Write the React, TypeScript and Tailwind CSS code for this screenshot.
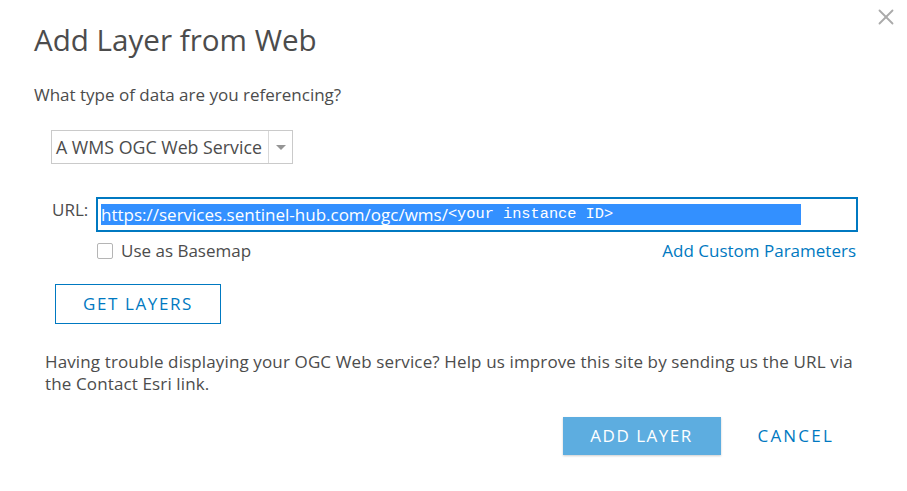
import { X } from "lucide-react";

const font = { fontFamily: "'Open Sans', Lato, sans-serif" };

export default function App() {
  return (
    <div
      className="relative h-[491px] w-[907px] overflow-hidden bg-white text-[#4c4c4c]"
      style={font}
    >
      <button type="button" className="absolute right-[8px] top-[4px] text-[#aaaaaa]">
        <X className="h-[26px] w-[26px]" strokeWidth={1.7} />
      </button>

      <div className="pl-[34px] pt-[22px]">
        <h1 className="text-[29.6px] leading-[36px] font-normal">Add Layer from Web</h1>
        <p className="mt-[26px] text-[17px] leading-[22px]">What type of data are you referencing?</p>

        <div className="ml-[17px] mt-[24px] flex h-[34px] w-[242px] items-stretch border border-[#cacaca]">
          <span className="flex flex-1 items-center pl-[4px] text-[17.8px] whitespace-nowrap">A WMS OGC Web Service</span>
          <span className="flex w-[24px] items-center justify-center border-l border-[#d8d8d8]">
            <span className="h-0 w-0 border-x-[5px] border-t-[5px] border-x-transparent border-t-[#959595]" />
          </span>
        </div>

        <div className="mt-[33px] flex items-start">
          <span className="ml-[18px] mt-[2px] w-[44px] text-[17px] leading-[22px]">URL:</span>
          <div className="flex h-[35px] w-[762px] items-center border-2 border-[#0079c1] pl-[3px]">
            <span className="flex h-[21px] w-[700px] items-center whitespace-nowrap bg-[#3390ff] text-[17px] text-white">
              https://services.sentinel-hub.com/ogc/wms/
              <span className="text-[15.3px]" style={{ fontFamily: "'Liberation Mono', monospace" }}>
                &lt;your instance ID&gt;
              </span>
            </span>
          </div>
        </div>

        <div className="ml-[63px] mt-[8px] flex w-[759px] items-center justify-between text-[17px] leading-[22px]">
          <label className="flex items-center gap-[8px]">
            <span className="h-[16px] w-[16px] rounded-[2px] border border-[#b5b5b5] bg-white" />
            Use as Basemap
          </label>
          <a className="text-[#0079c1]">Add Custom Parameters</a>
        </div>

        <button
          type="button"
          className="ml-[21px] mt-[22px] h-[40px] w-[166px] border border-[#0079c1] text-[17px] tracking-[1.6px] text-[#0079c1]"
        >
          GET LAYERS
        </button>

        <p className="ml-[11px] mt-[27px] whitespace-nowrap text-[17px] leading-[22px] tracking-[0.13px]">
          Having trouble displaying your OGC Web service? Help us improve this site by sending us the URL via
          <br />
          the Contact Esri link.
        </p>

        <div className="mt-[22px] flex items-center justify-end pr-[73px]">
          <button
            type="button"
            className="h-[38px] w-[158px] bg-[#5dade0] text-[17px] tracking-[1.5px] text-white shadow-[0_1px_2px_rgba(0,0,0,0.2)]"
          >
            ADD LAYER
          </button>
          <button type="button" className="ml-[37px] text-[17px] tracking-[2.2px] text-[#0079c1]">
            CANCEL
          </button>
        </div>
      </div>
    </div>
  );
}
